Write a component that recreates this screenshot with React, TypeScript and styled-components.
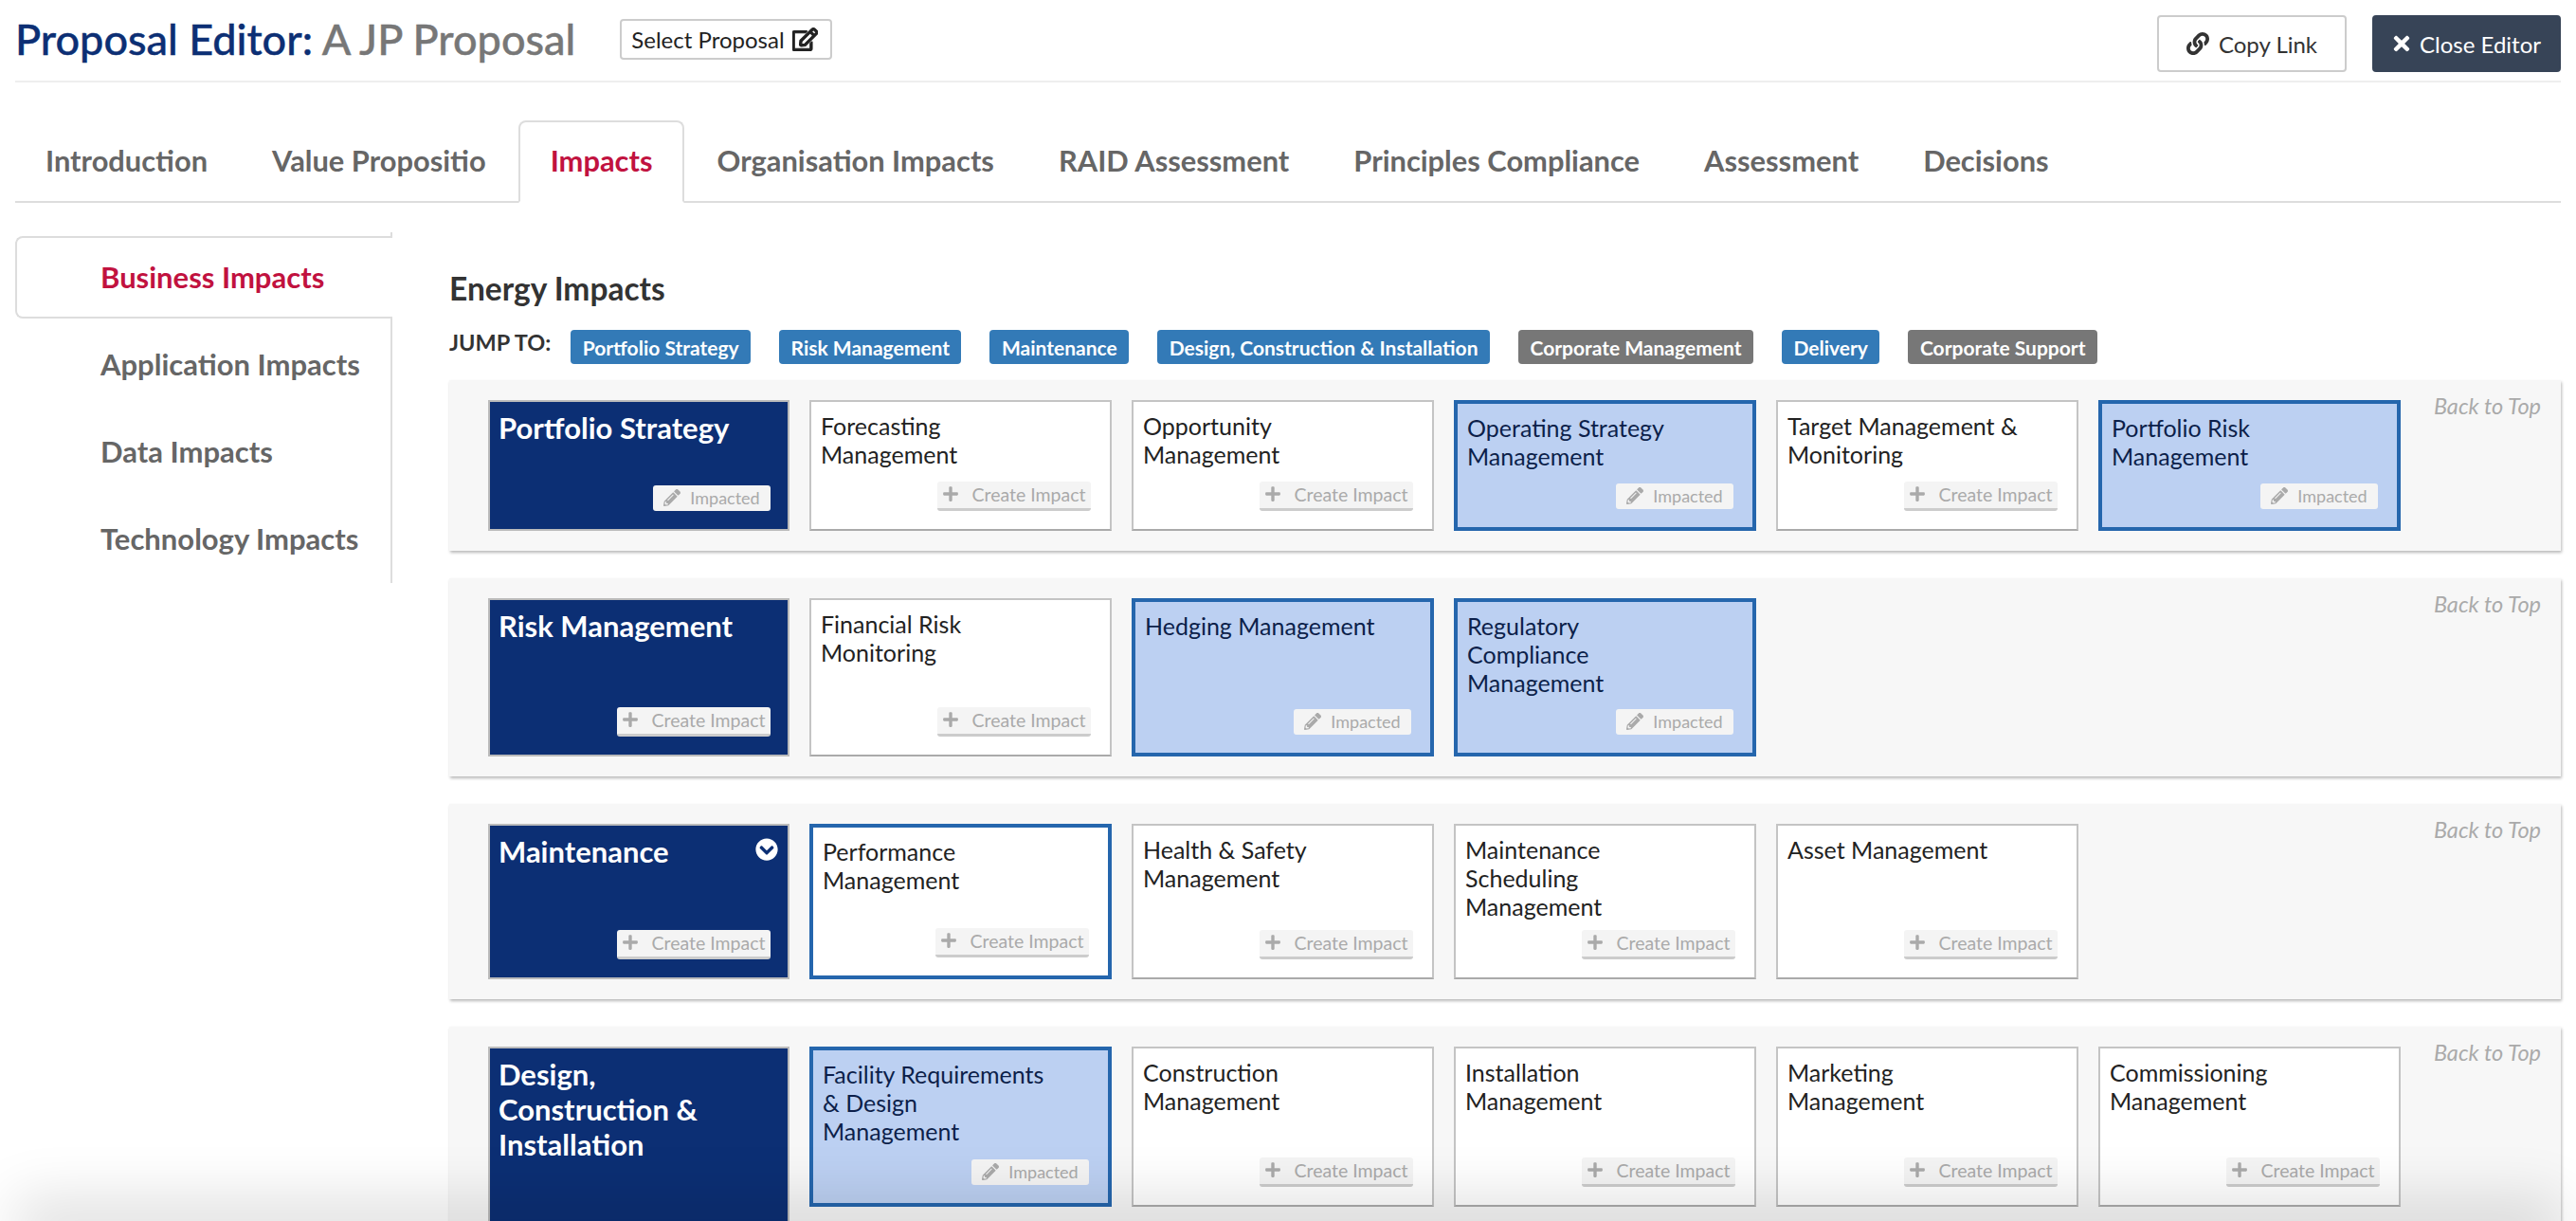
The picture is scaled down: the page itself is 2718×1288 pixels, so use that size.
import React from 'react';
import styled, { createGlobalStyle } from 'styled-components';
import {
  FaChevronCircleDown,
  FaLink,
  FaPencilAlt,
  FaPlus,
  FaRegEdit,
  FaTimes,
} from 'react-icons/fa';

type TileData = {
  name: string;
  impacted?: boolean;
  focused?: boolean;
};

type RowData = {
  name: string;
  height: number;
  headHeight?: number;
  headImpacted?: boolean;
  chevron?: boolean;
  tiles: TileData[];
};

const TABS = [
  'Introduction',
  'Value Propositio',
  'Impacts',
  'Organisation Impacts',
  'RAID Assessment',
  'Principles Compliance',
  'Assessment',
  'Decisions',
];

const SIDE_ITEMS = ['Application Impacts', 'Data Impacts', 'Technology Impacts'];

const CHIPS = [
  { label: 'Portfolio Strategy', active: true },
  { label: 'Risk Management', active: true },
  { label: 'Maintenance', active: true },
  { label: 'Design, Construction & Installation', active: true },
  { label: 'Corporate Management', active: false },
  { label: 'Delivery', active: true },
  { label: 'Corporate Support', active: false },
];

const ROWS: RowData[] = [
  {
    name: 'Portfolio Strategy',
    height: 138,
    headImpacted: true,
    tiles: [
      { name: 'Forecasting Management' },
      { name: 'Opportunity Management' },
      { name: 'Operating Strategy Management', impacted: true },
      { name: 'Target Management & Monitoring' },
      { name: 'Portfolio Risk Management', impacted: true },
    ],
  },
  {
    name: 'Risk Management',
    height: 167,
    tiles: [
      { name: 'Financial Risk Monitoring' },
      { name: 'Hedging Management', impacted: true },
      { name: 'Regulatory Compliance Management', impacted: true },
    ],
  },
  {
    name: 'Maintenance',
    height: 164,
    chevron: true,
    tiles: [
      { name: 'Performance Management', focused: true },
      { name: 'Health & Safety Management' },
      { name: 'Maintenance Scheduling Management' },
      { name: 'Asset Management' },
    ],
  },
  {
    name: 'Design, Construction & Installation',
    height: 169,
    headHeight: 230,
    tiles: [
      { name: 'Facility Requirements & Design Management', impacted: true },
      { name: 'Construction Management' },
      { name: 'Installation Management' },
      { name: 'Marketing Management' },
      { name: 'Commissioning Management' },
    ],
  },
];

const ImpactButton = ({ impacted }: { impacted?: boolean }) => (
  <ActionButton $impacted={impacted}>
    {impacted ? <FaPencilAlt /> : <FaPlus />}
    {impacted ? 'Impacted' : 'Create Impact'}
  </ActionButton>
);

export default function App() {
  return (
    <Page>
      <GlobalStyle />
      <Header>
        <Title>
          <TitleLead>Proposal Editor:</TitleLead> A JP Proposal
        </Title>
        <SelectButton>
          Select Proposal <FaRegEdit />
        </SelectButton>
        <HeaderActions>
          <CopyButton>
            <FaLink /> Copy Link
          </CopyButton>
          <CloseButton>
            <FaTimes /> Close Editor
          </CloseButton>
        </HeaderActions>
      </Header>

      <Tabs>
        {TABS.map((tab) => (
          <Tab key={tab} $active={tab === 'Impacts'}>
            {tab}
          </Tab>
        ))}
      </Tabs>

      <Body>
        <Sidebar>
          <SideActive>Business Impacts</SideActive>
          {SIDE_ITEMS.map((item) => (
            <SideItem key={item}>{item}</SideItem>
          ))}
        </Sidebar>

        <Content>
          <SectionTitle>Energy Impacts</SectionTitle>
          <JumpRow>
            <JumpLabel>JUMP TO:</JumpLabel>
            {CHIPS.map((chip) => (
              <Chip key={chip.label} $active={chip.active}>
                {chip.label}
              </Chip>
            ))}
          </JumpRow>

          {ROWS.map((row) => (
            <Panel key={row.name}>
              <HeadTile style={{ height: row.headHeight ?? row.height }}>
                <HeadTop>
                  <HeadName>{row.name}</HeadName>
                  {row.chevron && <FaChevronCircleDown />}
                </HeadTop>
                {!row.headHeight && <ImpactButton impacted={row.headImpacted} />}
              </HeadTile>
              {row.tiles.map((tile) => (
                <Tile
                  key={tile.name}
                  $impacted={tile.impacted}
                  $focused={tile.focused}
                  style={{ height: row.height }}
                >
                  <TileName>{tile.name}</TileName>
                  <ImpactButton impacted={tile.impacted} />
                </Tile>
              ))}
              <BackToTop>Back to Top</BackToTop>
            </Panel>
          ))}
        </Content>
      </Body>
      <BottomFade />
    </Page>
  );
}

const GlobalStyle = createGlobalStyle`
  html, body {
    margin: 0;
    height: 1288px;
    overflow: hidden;
    background: #fff;
  }
  * {
    box-sizing: border-box;
  }
`;

const Page = styled.div`
  position: relative;
  height: 1288px;
  padding: 0 16px;
  overflow: hidden;
  font-family: Lato, 'Noto Sans', sans-serif;
  color: #333;
`;

const Header = styled.header`
  display: flex;
  align-items: center;
  height: 87px;
  padding-bottom: 4px;
  border-bottom: 2px solid #eee;
`;

const Title = styled.h1`
  margin: 0;
  font-size: 45px;
  font-weight: 500;
  line-height: 50px;
  color: #777;
  -webkit-text-stroke: 0.4px currentColor;
`;

const TitleLead = styled.span`
  color: #0c2f74;
`;

const SelectButton = styled.button`
  display: flex;
  align-items: center;
  gap: 8px;
  height: 43px;
  margin: 2px 0 0 47px;
  padding: 0 13px 0 10px;
  background: #fff;
  border: 2px solid #ccc;
  border-radius: 4px;
  font: 400 24px Lato, sans-serif;
  color: #222;

  svg {
    width: 27px;
    height: 27px;
    stroke: currentColor;
    stroke-width: 24;
  }
`;

const HeaderActions = styled.div`
  display: flex;
  gap: 27px;
  margin: 11px 0 0 auto;
`;

const CopyButton = styled.button`
  display: flex;
  align-items: center;
  justify-content: center;
  gap: 10px;
  width: 200px;
  height: 60px;
  background: #fff;
  border: 2px solid #ccc;
  border-radius: 4px;
  font: 400 24px Lato, sans-serif;
  color: #333;

  svg {
    width: 24px;
    height: 24px;
  }
`;

const CloseButton = styled(CopyButton)`
  width: 199px;
  background: #374457;
  border-color: #374457;
  color: #fff;
  gap: 9px;

  svg {
    width: 20px;
    height: 24px;
  }
`;

const Tabs = styled.nav`
  display: flex;
  height: 87px;
  margin-top: 40px;
  border-bottom: 2px solid #ddd;
`;

const Tab = styled.div<{ $active?: boolean }>`
  display: flex;
  align-items: center;
  height: 87px;
  padding: 0 32px 2px;
  border: 2px solid ${(p) => (p.$active ? '#ddd' : 'transparent')};
  border-bottom-color: ${(p) => (p.$active ? '#fff' : 'transparent')};
  border-radius: 8px 8px 0 0;
  background: ${(p) => (p.$active ? '#fff' : 'transparent')};
  font-size: 30.85px;
  font-weight: 700;
  color: ${(p) => (p.$active ? '#c1123f' : '#666')};

  &:first-child {
    padding-left: 30px;
  }
`;

const Body = styled.main`
  display: flex;
  align-items: flex-start;
  margin-top: 31px;
`;

const Sidebar = styled.aside`
  flex: none;
  width: 398px;
  padding-top: 4px;
  border-right: 2px solid #ddd;
`;

const SideItem = styled.div`
  display: flex;
  align-items: center;
  height: 92px;
  padding: 0 0 2px 90px;
  font-size: 31px;
  font-weight: 700;
  color: #666;
`;

const SideActive = styled(SideItem)`
  height: 87px;
  margin-right: -2px;
  margin-bottom: 3px;
  background: #fff;
  border: 2px solid #ddd;
  border-right: none;
  border-radius: 8px 0 0 8px;
  padding-left: 88px;
  color: #c1123f;
`;

const Content = styled.section`
  flex: 1;
  min-width: 0;
  margin-left: 60px;
`;

const SectionTitle = styled.h2`
  margin: 40px 0 0;
  font-size: 33.5px;
  font-weight: 700;
  line-height: 38px;
  color: #333;
`;

const JumpRow = styled.div`
  display: flex;
  align-items: center;
  gap: 30px;
  margin-top: 25px;
  margin-bottom: 17px;
`;

const JumpLabel = styled.span`
  margin-right: -9px;
  margin-top: -10px;
  font-size: 23.5px;
  font-weight: 700;
  color: #333;
`;

const Chip = styled.span<{ $active?: boolean }>`
  display: flex;
  align-items: center;
  height: 36px;
  padding: 0 12.5px;
  border-radius: 4px;
  background: ${(p) => (p.$active ? '#337ab7' : '#777')};
  font-size: 21px;
  font-weight: 700;
  color: #fff;
`;

const Panel = styled.div`
  display: flex;
  align-items: flex-start;
  gap: 21px;
  margin-bottom: 29px;
  padding: 21px 21px 21px 41px;
  background: #f7f7f7;
  box-shadow: 1px 2px 3px rgba(0, 0, 0, 0.28);
`;

const HeadTile = styled.div`
  display: flex;
  flex-direction: column;
  flex: none;
  width: 318px;
  padding: 9px 18px 19px 9px;
  background: #0c2f74;
  border: 2px solid #bbb;
  color: #fff;
`;

const HeadTop = styled.div`
  display: flex;
  justify-content: space-between;
  margin-bottom: auto;

  svg {
    flex: none;
    width: 24px;
    height: 24px;
    margin: 4px -8px 0 0;
  }
`;

const HeadName = styled.div`
  max-width: 265px;
  font-size: 31px;
  font-weight: 700;
  line-height: 37px;
`;

const Tile = styled.div<{ $impacted?: boolean; $focused?: boolean }>`
  display: flex;
  flex-direction: column;
  flex: none;
  width: 319px;
  padding: 10px 20px 19px 10px;
  background: ${(p) => (p.$impacted ? '#bcd0f2' : '#fff')};
  border: ${(p) => (p.$impacted || p.$focused ? '4px solid #2566ad' : '2px solid #c4c4c4')};
  border-bottom-color: ${(p) => (p.$impacted || p.$focused ? '#2566ad' : '#aaa')};
  color: ${(p) => (p.$impacted ? '#0c1f4a' : '#222')};
`;

const TileName = styled.div`
  max-width: 250px;
  margin-bottom: auto;
  font-size: 25px;
  line-height: 30px;
`;

const ActionButton = styled.div<{ $impacted?: boolean }>`
  display: flex;
  align-items: center;
  align-self: flex-end;
  justify-content: center;
  gap: ${(p) => (p.$impacted ? '10px' : '13px')};
  width: ${(p) => (p.$impacted ? '124px' : '162px')};
  height: ${(p) => (p.$impacted ? '27px' : '31px')};
  padding-bottom: 2px;
  background: #f4f4f4;
  border-radius: 3px;
  border-bottom: ${(p) => (p.$impacted ? 'none' : '3px solid #ccc')};
  font-size: ${(p) => (p.$impacted ? '18px' : '19.5px')};
  color: #aaa;

  svg {
    width: 18px;
    height: 18px;
  }
`;

const BackToTop = styled.div`
  margin-left: auto;
  margin-top: -8px;
  font-size: 23.5px;
  font-style: italic;
  color: #aaa;
`;

const BottomFade = styled.div`
  position: absolute;
  left: 40px;
  right: 40px;
  bottom: -10px;
  height: 10px;
  box-shadow: 0 0 60px 24px rgba(0, 0, 0, 0.13);
  pointer-events: none;
`;
